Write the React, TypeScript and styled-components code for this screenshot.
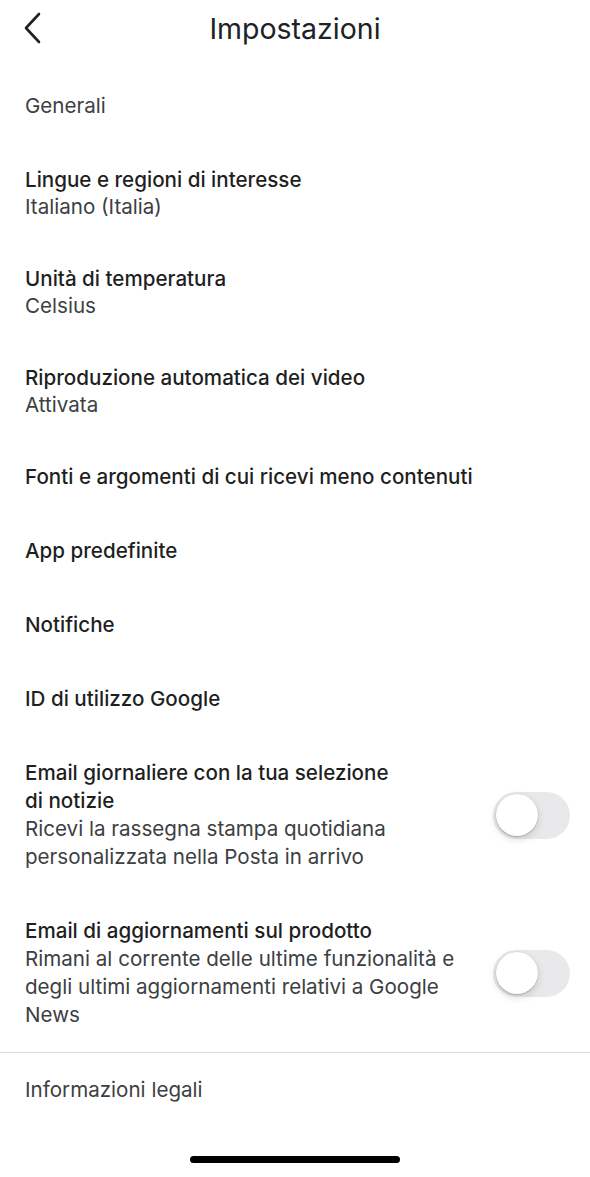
import React, { useState } from 'react';
import styled, { createGlobalStyle } from 'styled-components';

const GlobalStyle = createGlobalStyle`
  html, body {
    margin: 0;
    padding: 0;
    background: #ffffff;
  }
  body {
    font-family: Inter, Roboto, 'Liberation Sans', sans-serif;
    -webkit-font-smoothing: antialiased;
  }
`;

const Screen = styled.div`
  width: 590px;
  min-height: 1177px;
  display: flex;
  flex-direction: column;
  background: #fff;
  color: #202124;
`;

const Header = styled.header`
  height: 56px;
  display: grid;
  grid-template-columns: 64px 1fr 64px;
  align-items: center;
`;

const BackButton = styled.button`
  border: none;
  background: none;
  padding: 0 0 0 22px;
  height: 56px;
  display: flex;
  align-items: center;
  color: #202124;
  cursor: pointer;
`;

const Title = styled.h1`
  margin: 0;
  text-align: center;
  font-size: 28.5px;
  font-weight: 400;
  color: #202124;
`;

const List = styled.div`
  display: flex;
  flex-direction: column;
  padding-top: 13px;
`;

const Row = styled.div<{ $divider?: boolean }>`
  display: flex;
  align-items: center;
  gap: 12px;
  padding: 23px 20px 23px 25px;
  border-top: ${(p) => (p.$divider ? '1.5px solid #dcdcdc' : 'none')};
`;

const TextCol = styled.div`
  flex: 1;
  min-width: 0;
`;

const SectionLabel = styled.div`
  font-size: 20.6px;
  line-height: 28px;
  color: #3c4043;
`;

const ItemTitle = styled.div<{ $narrow?: boolean }>`
  font-size: 20.6px;
  line-height: 28px;
  font-weight: 500;
  color: #1f1f1f;
  max-width: ${(p) => (p.$narrow ? '385px' : 'none')};
`;

const Value = styled.div`
  font-size: 20.6px;
  line-height: 25px;
  color: #3c4043;
`;

const Description = styled.div`
  font-size: 20.6px;
  line-height: 28px;
  color: #3c4043;
`;

const Track = styled.button<{ $on: boolean }>`
  flex: none;
  position: relative;
  width: 77px;
  height: 47px;
  border: none;
  padding: 0;
  border-radius: 24px;
  background: ${(p) => (p.$on ? '#34c759' : '#e9e9eb')};
  cursor: pointer;
  transition: background 0.2s;
`;

const Knob = styled.span<{ $on: boolean }>`
  position: absolute;
  top: 2.5px;
  left: ${(p) => (p.$on ? '32.5px' : '2.5px')};
  width: 42px;
  height: 42px;
  border-radius: 50%;
  background: #fff;
  box-shadow: 0 3px 8px rgba(0, 0, 0, 0.15), 0 1px 1px rgba(0, 0, 0, 0.16),
    0 0 0 0.5px rgba(0, 0, 0, 0.06);
  transition: left 0.2s;
`;

const HomeBar = styled.div`
  margin: auto auto 14px;
  width: 210px;
  height: 7px;
  border-radius: 4px;
  background: #000;
`;

const Chevron: React.FC = () => (
  <svg width="22" height="32" viewBox="0 0 22 32" fill="none">
    <path
      d="M17 2 L4 16 L17 30"
      stroke="currentColor"
      strokeWidth="2.6"
      strokeLinecap="round"
      strokeLinejoin="round"
    />
  </svg>
);

const Toggle: React.FC<{ on: boolean; onChange: () => void }> = ({
  on,
  onChange,
}) => (
  <Track $on={on} onClick={onChange} aria-pressed={on}>
    <Knob $on={on} />
  </Track>
);

const items = [
  { title: 'Lingue e regioni di interesse', value: 'Italiano (Italia)' },
  { title: 'Unità di temperatura', value: 'Celsius' },
  { title: 'Riproduzione automatica dei video', value: 'Attivata' },
  { title: 'Fonti e argomenti di cui ricevi meno contenuti' },
  { title: 'App predefinite' },
  { title: 'Notifiche' },
  { title: 'ID di utilizzo Google' },
];

const App: React.FC = () => {
  const [daily, setDaily] = useState(false);
  const [product, setProduct] = useState(false);

  return (
    <>
      <GlobalStyle />
      <Screen>
        <Header>
          <BackButton aria-label="Indietro">
            <Chevron />
          </BackButton>
          <Title>Impostazioni</Title>
          <span />
        </Header>
        <List>
          <Row>
            <SectionLabel>Generali</SectionLabel>
          </Row>
          {items.map((item) => (
            <Row key={item.title}>
              <TextCol>
                <ItemTitle>{item.title}</ItemTitle>
                {item.value && <Value>{item.value}</Value>}
              </TextCol>
            </Row>
          ))}
          <Row>
            <TextCol>
              <ItemTitle $narrow>
                Email giornaliere con la tua selezione di notizie
              </ItemTitle>
              <Description>
                Ricevi la rassegna stampa quotidiana personalizzata nella Posta
                in arrivo
              </Description>
            </TextCol>
            <Toggle on={daily} onChange={() => setDaily(!daily)} />
          </Row>
          <Row>
            <TextCol>
              <ItemTitle>Email di aggiornamenti sul prodotto</ItemTitle>
              <Description>
                Rimani al corrente delle ultime funzionalità e degli ultimi
                aggiornamenti relativi a Google News
              </Description>
            </TextCol>
            <Toggle on={product} onChange={() => setProduct(!product)} />
          </Row>
          <Row $divider>
            <SectionLabel>Informazioni legali</SectionLabel>
          </Row>
        </List>
        <HomeBar />
      </Screen>
    </>
  );
};

export default App;
